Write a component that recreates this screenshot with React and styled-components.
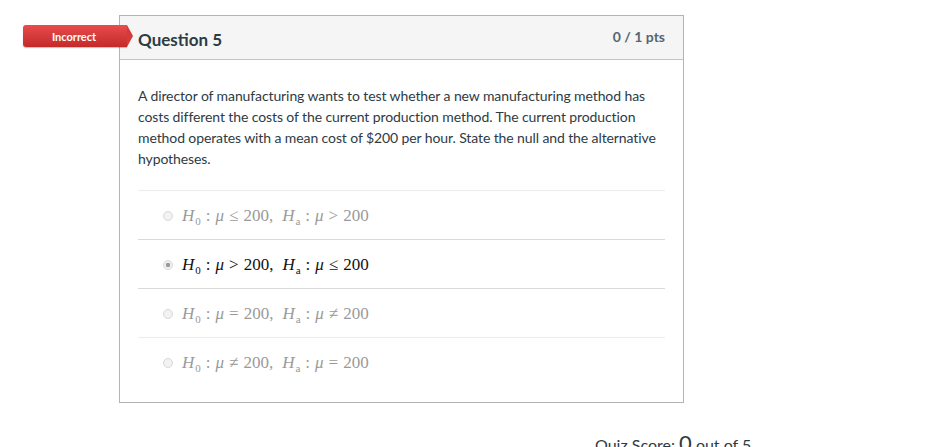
import styled, { createGlobalStyle } from "styled-components";

const GlobalStyle = createGlobalStyle`
  html, body {
    margin: 0;
    padding: 0;
    background: #ffffff;
    font-family: Lato, "Liberation Sans", sans-serif;
    color: #2d3b45;
    overflow: hidden;
  }
`;

const Page = styled.div`
  width: 934px;
  height: 447px;
  padding-top: 15px;
  box-sizing: border-box;
`;

const Card = styled.div`
  position: relative;
  margin-left: 119px;
  width: 565px;
  box-sizing: border-box;
  border: 1px solid #b4b4b4;
  background: #fff;
`;

const Header = styled.div`
  display: flex;
  align-items: center;
  justify-content: space-between;
  height: 43px;
  padding: 0 18px;
  background: #f5f5f5;
  border-bottom: 1px solid #c4c4c4;
`;

const Title = styled.h2`
  margin: 3px 0 0;
  font-size: 17px;
  font-weight: 700;
  color: #2d3b45;
`;

const Points = styled.div`
  font-size: 14px;
  font-weight: 700;
  color: #556572;
  margin-top: -2px;
`;

const Badge = styled.div`
  position: absolute;
  left: -97px;
  top: 9px;
  width: 104px;
  height: 22px;
  display: flex;
  align-items: center;
  justify-content: center;
  padding-right: 2px;
  box-sizing: border-box;
  color: #fff;
  font-size: 11px;
  font-weight: 700;
  background: linear-gradient(#e84c4c, #c42a2a);
  border-radius: 3px 0 0 3px;
  box-shadow: 0 1px 1px rgba(0, 0, 0, 0.25);

  &::after {
    content: "";
    position: absolute;
    right: -6px;
    top: 0;
    border-top: 11px solid transparent;
    border-bottom: 11px solid transparent;
    border-left: 6px solid #d53a3a;
  }
`;

const Body = styled.div`
  padding: 25px 18px 16px;
`;

const Text = styled.p`
  margin: 0 0 21px;
  font-size: 14px;
  line-height: 21px;
  letter-spacing: -0.1px;
  color: #2d3b45;
`;

const Answers = styled.div`
  display: flex;
  flex-direction: column;
`;

const Answer = styled.div`
  display: flex;
  align-items: center;
  height: 48px;
  padding-left: 25px;
  border-top: 1px solid ${(p) => (p.$strong ? "#dadada" : "#ececec")};
  color: ${(p) => (p.$selected ? "#111" : "#9a9a9a")};
`;

const Radio = styled.span`
  width: 10px;
  height: 10px;
  border-radius: 50%;
  box-sizing: border-box;
  border: 1px solid #d8d8d8;
  background: ${(p) => (p.$on ? "radial-gradient(circle, #9a9a9a 0 2px, #f0f0f0 2.5px)" : "#f2f2f2")};
  margin-right: 9px;
  margin-top: 1px;
`;

const Math = styled.span`
  font-family: "Liberation Serif", "DejaVu Serif", serif;
  font-size: 17px;
  white-space: pre;
  display: inline-flex;
  align-items: baseline;
  margin-top: 2px;
`;

const V = styled.i`
  font-style: italic;
`;

const Sub = styled.span`
  font-size: 11px;
  position: relative;
  top: 4px;
  margin-left: 1px;
`;

const Op = styled.span`
  margin: 0 ${(p) => p.$gap || 5}px;
`;

const Space = styled.span`
  width: 9px;
`;

const Score = styled.div`
  margin: 26px 0 0 595px;
  font-size: 16px;
  color: #2d3b45;
  white-space: nowrap;

  b {
    font-size: 22px;
    font-weight: 400;
  }
`;

const H = ({ sub }) => (
  <>
    <V>H</V>
    <Sub>{sub}</Sub>
  </>
);

const Expr = ({ a, b }) => (
  <Math>
    <H sub="0" />
    <Op>:</Op>
    <V>μ</V>
    <Op>{a}</Op>
    200,
    <Space />
    <H sub="a" />
    <Op>:</Op>
    <V>μ</V>
    <Op>{b}</Op>
    200
  </Math>
);

const options = [
  { a: "≤", b: ">" },
  { a: ">", b: "≤", selected: true },
  { a: "=", b: "≠" },
  { a: "≠", b: "=" },
];

export default function App() {
  return (
    <>
      <GlobalStyle />
      <Page>
        <Card>
          <Badge>Incorrect</Badge>
          <Header>
            <Title>Question 5</Title>
            <Points>0 / 1 pts</Points>
          </Header>
          <Body>
            <Text>
              A director of manufacturing wants to test whether a new manufacturing method has
              costs different the costs of the current production method. The current production
              method operates with a mean cost of $200 per hour. State the null and the alternative
              hypotheses.
            </Text>
            <Answers>
              {options.map((o, i) => (
                <Answer key={i} $selected={o.selected} $strong={i === 1 || i === 2}>
                  <Radio $on={o.selected} />
                  <Expr a={o.a} b={o.b} />
                </Answer>
              ))}
            </Answers>
          </Body>
        </Card>
        <Score>
          Quiz Score: <b>0</b> out of 5
        </Score>
      </Page>
    </>
  );
}
